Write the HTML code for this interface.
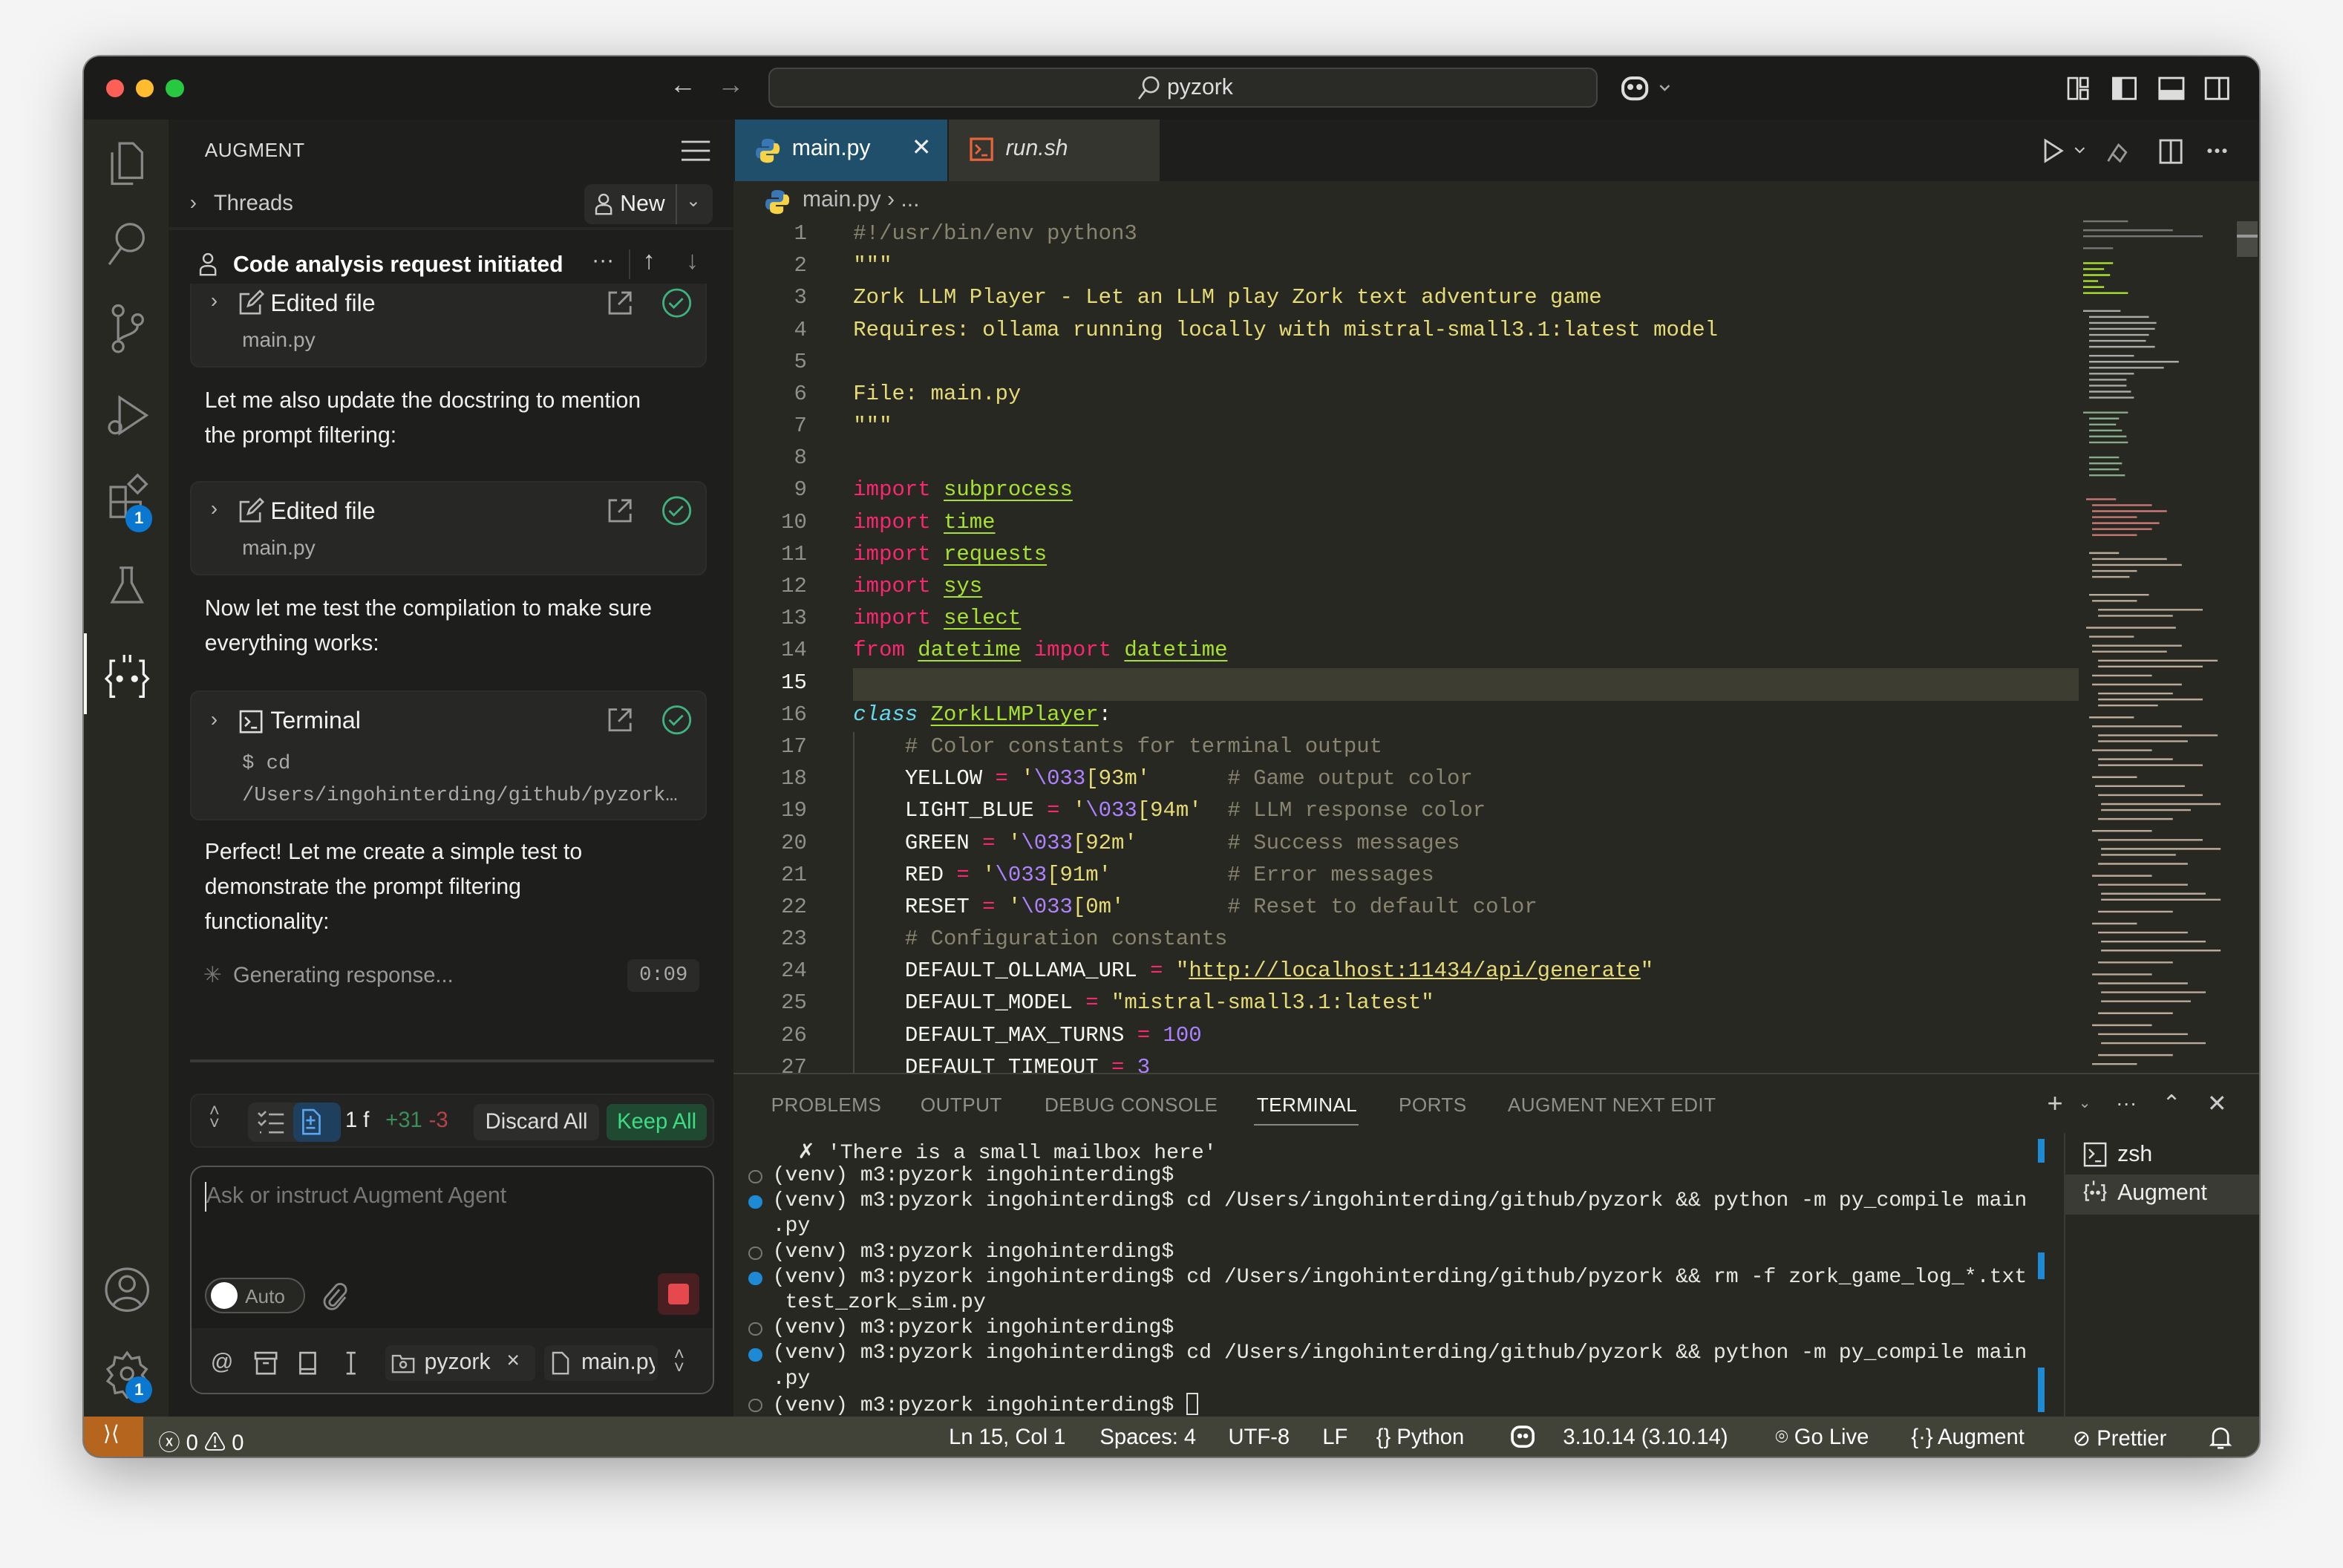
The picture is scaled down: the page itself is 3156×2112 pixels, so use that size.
<!DOCTYPE html>
<html><head><meta charset="utf-8">
<style>
*{box-sizing:border-box;margin:0;padding:0}
html,body{width:3156px;height:2112px;overflow:hidden;background:#f4f4f4}
#z{zoom:2.0128;width:1568px;height:1050px;position:relative;font-family:"Liberation Sans",sans-serif;}
.a{position:absolute}
.win{left:56px;top:38px;width:1456px;height:937px;border-radius:11px;background:#1e1f1c;overflow:hidden;box-shadow:0 10px 40px rgba(0,0,0,.35),0 0 0 1px rgba(0,0,0,.4)}
.mono{font-family:"Liberation Mono",monospace}
.ln{position:absolute;left:0;width:540px;text-align:right;color:#90908a;font-size:14.4px}
.cl{position:absolute;left:571px;white-space:pre;font-size:14.4px;color:#f8f8f2}
.k{color:#f92672}.g{color:#a6e22e;text-decoration:underline;text-underline-offset:3px}.y{color:#e6db74}.c{color:#88846f}.p{color:#ae81ff}.b{color:#66d9ef;font-style:italic}
.t{position:absolute;left:517px;white-space:pre;font-size:14px;color:#e8e8e2;font-family:"Liberation Mono",monospace}
.dot{position:absolute;left:501px;width:9px;height:9px;border-radius:50%}
.o{border:1.3px solid #777}.f{background:#1e8ad6}
.card{position:absolute;left:127px;width:346px;background:#272825;border-radius:6px;border:1px solid #2d2e2b}
.ct{color:#f2f2f2;font-size:16px}
.sub{color:#aaa;font-size:14px}
.msg{position:absolute;left:137px;color:#f0f0f0;font-size:15px;line-height:23.3px}
.st{position:absolute;top:954px;color:#fff;font-size:14.5px;white-space:nowrap}
.ptab{position:absolute;top:732px;font-size:13px;color:#8f908a;letter-spacing:.2px}
svg{position:absolute}
</style></head><body><div id="z">
<div class="a win">
</div>
<div class="a" style="left:56px;top:38px;width:1456px;height:42px;background:#1b1c19;border-radius:11px 11px 0 0"></div>
<div class="a" style="left:71px;top:53px;width:12px;height:12px;border-radius:50%;background:#fe5f57"></div>
<div class="a" style="left:91px;top:53px;width:12px;height:12px;border-radius:50%;background:#febc2e"></div>
<div class="a" style="left:111px;top:53px;width:12px;height:12px;border-radius:50%;background:#28c840"></div>
<div class="a" style="left:448px;top:46px;color:#ccc;font-size:18px">←</div>
<div class="a" style="left:480px;top:46px;color:#888;font-size:18px">→</div>
<div class="a" style="left:514px;top:45px;width:555px;height:27px;border-radius:6px;background:#2a2b27;border:1px solid #444"></div>
<svg style="left:760px;top:50px" width="18" height="18" viewBox="0 0 18 18"><circle cx="10" cy="6.5" r="5" fill="none" stroke="#ccc" stroke-width="1.3"/><path d="M6.5 10 L2 16" stroke="#ccc" stroke-width="1.3"/></svg>
<div class="a" style="left:781px;top:50px;color:#ddd;font-size:15px">pyzork</div>
<svg style="left:1084px;top:49px" width="36" height="20" viewBox="0 0 36 20"><rect x="2" y="3" width="16" height="14" rx="6" fill="none" stroke="#ddd" stroke-width="2"/><circle cx="7" cy="9" r="2" fill="#ddd"/><circle cx="13" cy="9" r="2" fill="#ddd"/><path d="M27 8l3 3 3-3" fill="none" stroke="#aaa" stroke-width="1.2"/></svg>
<svg style="left:1382px;top:49px" width="120" height="20" viewBox="0 0 120 20"><rect x="2" y="3" width="6" height="14" fill="none" stroke="#ddd" stroke-width="1.3"/><rect x="10" y="3" width="5" height="6" fill="none" stroke="#ddd" stroke-width="1.3"/><rect x="10" y="11" width="5" height="6" fill="none" stroke="#ddd" stroke-width="1.3"/><rect x="32" y="3" width="15" height="14" fill="none" stroke="#ddd" stroke-width="1.4"/><rect x="32" y="3" width="6" height="14" fill="#ddd"/><rect x="63" y="3" width="16" height="14" fill="none" stroke="#ddd" stroke-width="1.4"/><rect x="63" y="11" width="16" height="6" fill="#ddd"/><rect x="94" y="3" width="15" height="14" fill="none" stroke="#ddd" stroke-width="1.4"/><line x1="103" y1="3" x2="103" y2="17" stroke="#ddd" stroke-width="1.4"/></svg>

<div class="a" style="left:56px;top:80px;width:57px;height:868px;background:#272822"></div>
<div class="a" style="left:56px;top:424px;width:2px;height:54px;background:#f8f8f2"></div>
<svg style="left:68px;top:88px" width="34" height="380" viewBox="0 0 34 380" fill="none" stroke="#888" stroke-width="1.6">
 <path d="M12 8h9l6 6v17H12z M7 14v21h14"/>
 <circle cx="19" cy="71" r="9"/><path d="M13 78L5 89"/>
 <circle cx="11" cy="120" r="3.5"/><circle cx="11" cy="144" r="3.5"/><circle cx="24" cy="126" r="3.5"/><path d="M11 124v16 M24 130c0 6-10 6-13 10"/>
 <path d="M12 178l18 12-18 12z"/><circle cx="9" cy="198" r="4"/>
 <path d="M6 238h10v10H6z M6 248v10h10v-10 M16 248h10v10H16 M18 236l6-6 6 6-6 6z"/>
 <path d="M12 292h9 M14 292v10l-7 13h20l-7-13v-10"/>
</svg>
<div class="a" style="left:84px;top:338px;width:18px;height:18px;border-radius:50%;background:#0a78d0;color:#fff;font-size:11px;font-weight:bold;text-align:center;line-height:18px">1</div>
<svg style="left:68px;top:436px" width="34" height="34" viewBox="0 0 34 34" fill="none" stroke="#f2f2f2" stroke-width="1.6"><path d="M9 6H6v9l-3 3 3 3v9h3 M25 6h3v9l3 3-3 3v9h-3 M15 2v5 M19 2v5"/><circle cx="12" cy="18" r="1.5" fill="#f2f2f2"/><circle cx="22" cy="18" r="1.5" fill="#f2f2f2"/></svg>
<svg style="left:68px;top:846px" width="34" height="34" viewBox="0 0 34 34" fill="none" stroke="#888" stroke-width="1.6"><circle cx="17" cy="17" r="14"/><circle cx="17" cy="13" r="5"/><path d="M8 27c3-6 15-6 18 0"/></svg>
<svg style="left:68px;top:902px" width="34" height="34" viewBox="0 0 34 34" fill="none" stroke="#888" stroke-width="1.6"><path d="M17 3l3 4 5-1 1 5 4 3-3 4 3 4-4 3-1 5-5-1-3 4-3-4-5 1-1-5-4-3 3-4-3-4 4-3 1-5 5 1z"/><circle cx="17" cy="17" r="4"/></svg>
<div class="a" style="left:84px;top:921px;width:18px;height:18px;border-radius:50%;background:#0a78d0;color:#fff;font-size:11px;font-weight:bold;text-align:center;line-height:18px">1</div>

<div class="a" style="left:113px;top:80px;width:378px;height:868px;background:#1e1f1c"></div>
<div class="a" style="left:137px;top:93px;color:#ddd;font-size:13px;letter-spacing:.3px">AUGMENT</div>
<svg style="left:456px;top:94px" width="20" height="14" viewBox="0 0 20 14" stroke="#ccc" stroke-width="1.4"><path d="M0 1h19M0 7h19M0 13h19"/></svg>
<div class="a" style="left:127px;top:127px;color:#bbb;font-size:14px">›</div>
<div class="a" style="left:143px;top:128px;color:#ccc;font-size:14.5px">Threads</div>
<div class="a" style="left:391px;top:123px;width:86px;height:27px;border-radius:5px;background:#2b2c29"></div>
<div class="a" style="left:452px;top:123px;width:1px;height:27px;background:#444"></div>
<svg style="left:396px;top:128px" width="16" height="16" viewBox="0 0 16 16" fill="none" stroke="#ccc" stroke-width="1.2"><circle cx="8" cy="5" r="3"/><path d="M3 15v-3c0-2 2-3 5-3s5 1 5 3v3z"/></svg>
<div class="a" style="left:415px;top:128px;color:#eee;font-size:15px">New</div>
<div class="a" style="left:459px;top:127px;color:#bbb;font-size:12px">⌄</div>
<div class="a" style="left:113px;top:152px;width:378px;height:2px;background:#262724"></div>
<svg style="left:131px;top:168px" width="16" height="18" viewBox="0 0 16 18" fill="none" stroke="#ccc" stroke-width="1.2"><circle cx="8" cy="5" r="3"/><path d="M3 16v-3c0-2 2-3 5-3s5 1 5 3v3z"/></svg>
<div class="a" style="left:156px;top:169px;color:#fff;font-size:15px;font-weight:bold">Code analysis request initiated</div>
<div class="a" style="left:396px;top:166px;color:#ccc;font-size:15px">···</div>
<div class="a" style="left:421px;top:167px;width:1px;height:20px;background:#3a3a3a"></div>
<div class="a" style="left:430px;top:165px;color:#ccc;font-size:17px">↑</div>
<div class="a" style="left:459px;top:165px;color:#888;font-size:17px">↓</div>

<div class="card" style="top:190px;height:56px;border-top:none;border-radius:0 0 6px 6px"></div>
<div class="card" style="top:322px;height:63px"></div>
<div class="card" style="top:462px;height:87px"></div>
<div class="a" style="left:141px;top:193px;color:#bbb;font-size:14px">›</div>
<div class="a" style="left:141px;top:332px;color:#bbb;font-size:14px">›</div>
<div class="a" style="left:141px;top:473px;color:#bbb;font-size:14px">›</div>
<svg style="left:159px;top:194px" width="18" height="18" viewBox="0 0 18 18" fill="none" stroke="#bbb" stroke-width="1.3"><path d="M8 3H2v13h13v-6 M7 11l1-3 7-7 2 2-7 7z"/></svg>
<svg style="left:159px;top:333px" width="18" height="18" viewBox="0 0 18 18" fill="none" stroke="#bbb" stroke-width="1.3"><path d="M8 3H2v13h13v-6 M7 11l1-3 7-7 2 2-7 7z"/></svg>
<svg style="left:159px;top:474px" width="18" height="18" viewBox="0 0 18 18" fill="none" stroke="#ddd" stroke-width="1.3"><rect x="2" y="2" width="14" height="14"/><path d="M5 6l3 3-3 3 M9 13h4"/></svg>
<div class="a ct" style="left:181px;top:194px">Edited file</div>
<div class="a ct" style="left:181px;top:333px">Edited file</div>
<div class="a ct" style="left:181px;top:473px">Terminal</div>
<div class="a sub" style="left:162px;top:219px">main.py</div>
<div class="a sub" style="left:162px;top:358px">main.py</div>
<div class="a sub mono" style="left:162px;top:501px;font-size:13.5px;line-height:21px;color:#aaa">$ cd<br>/Users/ingohinterding/github/pyzork…</div>
<svg style="left:405px;top:193px" width="60" height="300" viewBox="0 0 60 300" fill="none" stroke-width="1.4">
 <g stroke="#999"><path d="M8 3H3v14h14v-5 M11 3h6v6 M17 3l-8 8"/></g>
 <g stroke="#3fb27f"><circle cx="48" cy="10" r="9"/><path d="M43 10l3 3 6-6"/></g>
 <g transform="translate(0,139)"><g stroke="#999"><path d="M8 3H3v14h14v-5 M11 3h6v6 M17 3l-8 8"/></g><g stroke="#3fb27f"><circle cx="48" cy="10" r="9"/><path d="M43 10l3 3 6-6"/></g></g>
 <g transform="translate(0,279)"><g stroke="#999"><path d="M8 3H3v14h14v-5 M11 3h6v6 M17 3l-8 8"/></g><g stroke="#3fb27f"><circle cx="48" cy="10" r="9"/><path d="M43 10l3 3 6-6"/></g></g>
</svg>
<div class="msg" style="top:257px">Let me also update the docstring to mention<br>the prompt filtering:</div>
<div class="msg" style="top:396px">Now let me test the compilation to make sure<br>everything works:</div>
<div class="msg" style="top:559px">Perfect! Let me create a simple test to<br>demonstrate the prompt filtering<br>functionality:</div>
<div class="a" style="left:136px;top:644px;color:#777;font-size:15px">✳</div>
<div class="a" style="left:156px;top:645px;color:#999;font-size:14.5px">Generating response...</div>
<div class="a mono" style="left:420px;top:642px;width:48px;height:22px;background:#2a2b28;border-radius:4px;color:#aaa;font-size:13.5px;text-align:center;line-height:22px">0:09</div>
<div class="a" style="left:127px;top:709px;width:351px;height:2px;background:#3a3b38"></div>
<div class="a" style="left:127px;top:732px;width:351px;height:36px;border-radius:6px;background:#232421;border:1px solid #2b2c29"></div>
<div class="a" style="left:140px;top:740px;color:#aaa;font-size:12px;line-height:8px">˄<br>˅</div>
<div class="a" style="left:166px;top:738px;width:62px;height:26px;border-radius:5px;background:#2d2e2b"></div>
<div class="a" style="left:196px;top:738px;width:32px;height:26px;border-radius:5px;background:#1f3f5f"></div>
<svg style="left:172px;top:742px" width="52" height="18" viewBox="0 0 52 18" fill="none" stroke-width="1.3"><path d="M1 3l2 2 3-3 M1 9l2 2 3-3 M8 4h10 M8 10h10 M8 16h10 M2 16h1" stroke="#aaa"/><path d="M31 1h7l4 4v12H31z M36 5v6 M33 8h6 M33 13h6" stroke="#5aa7f0"/></svg>
<div class="a" style="left:231px;top:742px;color:#eee;font-size:14.5px">1 f</div>
<div class="a" style="left:258px;top:742px;color:#3d8f5a;font-size:14.5px">+31</div>
<div class="a" style="left:287px;top:742px;color:#b8424a;font-size:14.5px">-3</div>
<div class="a" style="left:317px;top:739px;width:84px;height:24px;border-radius:4px;background:#2d2e2b;color:#ddd;font-size:14.5px;text-align:center;line-height:24px">Discard All</div>
<div class="a" style="left:406px;top:739px;width:67px;height:24px;border-radius:4px;background:#1f4a31;color:#3ddc84;font-size:14.5px;text-align:center;line-height:24px">Keep All</div>
<div class="a" style="left:127px;top:780px;width:351px;height:153px;border-radius:9px;border:1px solid #555;background:#1c1d1a;overflow:hidden">
 <div class="a" style="left:0;top:108px;width:351px;height:45px;background:#232421"></div>
</div>
<div class="a" style="left:137px;top:791px;width:1px;height:20px;background:#ddd"></div>
<div class="a" style="left:138px;top:792px;color:#777;font-size:15px">Ask or instruct Augment Agent</div>
<div class="a" style="left:137px;top:855px;width:67px;height:24px;border-radius:12px;border:1px solid #555;background:#262723"></div>
<div class="a" style="left:141px;top:858px;width:18px;height:18px;border-radius:50%;background:#fff"></div>
<div class="a" style="left:164px;top:860px;color:#999;font-size:13px">Auto</div>
<svg style="left:215px;top:857px" width="18" height="20" viewBox="0 0 18 20" fill="none" stroke="#888" stroke-width="1.4"><path d="M12 6l-6 7a2 2 0 0 0 3 3l7-8a4 4 0 0 0-6-5l-7 8a5 5 0 0 0 8 6l5-6"/></svg>
<div class="a" style="left:440px;top:852px;width:28px;height:28px;border-radius:4px;background:#4a1f22"></div>
<div class="a" style="left:447px;top:859px;width:14px;height:14px;border-radius:2px;background:#e5484d"></div>
<div class="a" style="left:141px;top:903px;color:#bbb;font-size:15px">@</div>
<svg style="left:170px;top:903px" width="80" height="18" viewBox="0 0 80 18" fill="none" stroke="#bbb" stroke-width="1.3"><path d="M1 2h14v4H1z M2 6v10h12V6 M6 9h4"/><path d="M31 2h10v14H31z M31 13h10"/><path d="M62 2h6 M65 2v14 M62 16h6"/></svg>
<div class="a" style="left:258px;top:900px;width:100px;height:24px;border-radius:4px;background:#2a2b28"></div>
<svg style="left:262px;top:904px" width="16" height="16" viewBox="0 0 16 16" fill="none" stroke="#bbb" stroke-width="1.2"><path d="M1 3h5l1 2h8v9H1z"/><circle cx="8" cy="9" r="2"/></svg>
<div class="a" style="left:284px;top:903px;color:#ddd;font-size:15px">pyzork</div>
<div class="a" style="left:339px;top:902px;color:#ccc;font-size:15px">×</div>
<div class="a" style="left:364px;top:900px;width:76px;height:24px;border-radius:4px;background:#2a2b28"></div>
<svg style="left:368px;top:904px" width="14" height="16" viewBox="0 0 14 16" fill="none" stroke="#bbb" stroke-width="1.2"><path d="M2 1h6l4 4v10H2z"/></svg>
<div class="a" style="left:389px;top:903px;color:#ddd;font-size:15px;width:49px;overflow:hidden;white-space:nowrap">main.py</div>
<div class="a" style="left:451px;top:902px;color:#bbb;font-size:12px;line-height:9px">˄<br>˅</div>

<div class="a" style="left:491px;top:80px;width:1021px;height:868px;background:#272822"></div>
<div class="a" style="left:491px;top:80px;width:1021px;height:41px;background:#1e1f1c"></div>
<div class="a" style="left:492px;top:80px;width:142px;height:41px;background:#1f4f6b"></div>
<div class="a" style="left:635px;top:80px;width:141px;height:41px;background:#34352f"></div>
<svg style="left:506px;top:92px" width="16" height="18" viewBox="0 0 16 18"><path d="M8 1c-4 0-4 2-4 3v2h5v1H2c-2 0-2 3-2 4s1 3 2 3h2v-2c0-2 1-3 3-3h4c1 0 2-1 2-2V4c0-2-2-3-5-3z" fill="#3a78b5"/><path d="M8 17c4 0 4-2 4-3v-2H7v-1h7c2 0 2-3 2-4s-1-3-2-3h-2v2c0 2-1 3-3 3H5c-1 0-2 1-2 2v3c0 2 2 3 5 3z" fill="#f7d348"/></svg>
<div class="a" style="left:530px;top:91px;color:#fff;font-size:15px">main.py</div>
<div class="a" style="left:610px;top:89px;color:#eee;font-size:16px">✕</div>
<svg style="left:649px;top:92px" width="16" height="16" viewBox="0 0 16 16"><rect x="1" y="1" width="14" height="14" fill="none" stroke="#e8643a" stroke-width="1.6"/><path d="M4 5l3 3-3 3 M8 12h4" stroke="#e8643a" stroke-width="1.4" fill="none"/></svg>
<div class="a" style="left:673px;top:91px;color:#ddd;font-size:15px;font-style:italic">run.sh</div>
<svg style="left:1366px;top:92px" width="130" height="18" viewBox="0 0 130 18" fill="none" stroke="#ccc" stroke-width="1.4"><path d="M3 2l11 7-11 7z"/><path d="M23 7l3 3 3-3" stroke-width="1"/><path d="M52 5l5 5-4 6-5-5z M48 11l-3 5" stroke="#999"/><rect x="80" y="2" width="14" height="15"/><line x1="87" y1="2" x2="87" y2="17"/><circle cx="113" cy="9" r=".8" fill="#ccc"/><circle cx="118" cy="9" r=".8" fill="#ccc"/><circle cx="123" cy="9" r=".8" fill="#ccc"/></svg>
<svg style="left:512px;top:126px" width="16" height="18" viewBox="0 0 16 18"><path d="M8 1c-4 0-4 2-4 3v2h5v1H2c-2 0-2 3-2 4s1 3 2 3h2v-2c0-2 1-3 3-3h4c1 0 2-1 2-2V4c0-2-2-3-5-3z" fill="#3a78b5"/><path d="M8 17c4 0 4-2 4-3v-2H7v-1h7c2 0 2-3 2-4s-1-3-2-3h-2v2c0 2-1 3-3 3H5c-1 0-2 1-2 2v3c0 2 2 3 5 3z" fill="#f7d348"/></svg>
<div class="a" style="left:537px;top:125px;color:#bbb;font-size:15px">main.py › ...</div>
<div class="a" style="left:571px;top:447px;width:820px;height:22px;background:#3e3d32"></div>
<div class="a" style="left:571px;top:490px;width:1px;height:228px;background:#464741"></div>
<div class="mono a" style="left:0;top:0">
<div class="ln" style="top:148px">1</div><div class="cl c" style="top:148px">#!/usr/bin/env python3</div>
<div class="ln" style="top:169.5px">2</div><div class="cl y" style="top:169.5px">"""</div>
<div class="ln" style="top:191px">3</div><div class="cl y" style="top:191px">Zork LLM Player - Let an LLM play Zork text adventure game</div>
<div class="ln" style="top:212.4px">4</div><div class="cl y" style="top:212.4px">Requires: ollama running locally with mistral-small3.1:latest model</div>
<div class="ln" style="top:233.8px">5</div>
<div class="ln" style="top:255.3px">6</div><div class="cl y" style="top:255.3px">File: main.py</div>
<div class="ln" style="top:276.7px">7</div><div class="cl y" style="top:276.7px">"""</div>
<div class="ln" style="top:298.2px">8</div>
<div class="ln" style="top:319.7px">9</div><div class="cl" style="top:319.7px"><span class="k">import</span> <span class="g">subprocess</span></div>
<div class="ln" style="top:341.1px">10</div><div class="cl" style="top:341.1px"><span class="k">import</span> <span class="g">time</span></div>
<div class="ln" style="top:362.6px">11</div><div class="cl" style="top:362.6px"><span class="k">import</span> <span class="g">requests</span></div>
<div class="ln" style="top:384px">12</div><div class="cl" style="top:384px"><span class="k">import</span> <span class="g">sys</span></div>
<div class="ln" style="top:405.5px">13</div><div class="cl" style="top:405.5px"><span class="k">import</span> <span class="g">select</span></div>
<div class="ln" style="top:427px">14</div><div class="cl" style="top:427px"><span class="k">from</span> <span class="g">datetime</span> <span class="k">import</span> <span class="g">datetime</span></div>
<div class="ln" style="top:448.4px;color:#f8f8f2">15</div>
<div class="ln" style="top:469.9px">16</div><div class="cl" style="top:469.9px"><span class="b">class</span> <span class="g">ZorkLLMPlayer</span>:</div>
<div class="ln" style="top:491.3px">17</div><div class="cl" style="top:491.3px">    <span class="c"># Color constants for terminal output</span></div>
<div class="ln" style="top:512.8px">18</div><div class="cl" style="top:512.8px">    YELLOW <span class="k">=</span> <span class="y">'<span class="p">\033</span>[93m'</span>      <span class="c"># Game output color</span></div>
<div class="ln" style="top:534.2px">19</div><div class="cl" style="top:534.2px">    LIGHT_BLUE <span class="k">=</span> <span class="y">'<span class="p">\033</span>[94m'</span>  <span class="c"># LLM response color</span></div>
<div class="ln" style="top:555.7px">20</div><div class="cl" style="top:555.7px">    GREEN <span class="k">=</span> <span class="y">'<span class="p">\033</span>[92m'</span>       <span class="c"># Success messages</span></div>
<div class="ln" style="top:577.1px">21</div><div class="cl" style="top:577.1px">    RED <span class="k">=</span> <span class="y">'<span class="p">\033</span>[91m'</span>         <span class="c"># Error messages</span></div>
<div class="ln" style="top:598.6px">22</div><div class="cl" style="top:598.6px">    RESET <span class="k">=</span> <span class="y">'<span class="p">\033</span>[0m'</span>        <span class="c"># Reset to default color</span></div>
<div class="ln" style="top:620px">23</div><div class="cl" style="top:620px">    <span class="c"># Configuration constants</span></div>
<div class="ln" style="top:641.5px">24</div><div class="cl" style="top:641.5px">    DEFAULT_OLLAMA_URL <span class="k">=</span> <span class="y">"<u>http://localhost:11434/api/generate</u>"</span></div>
<div class="ln" style="top:663px">25</div><div class="cl" style="top:663px">    DEFAULT_MODEL <span class="k">=</span> <span class="y">"mistral-small3.1:latest"</span></div>
<div class="ln" style="top:684.4px">26</div><div class="cl" style="top:684.4px">    DEFAULT_MAX_TURNS <span class="k">=</span> <span class="p">100</span></div>
<div class="ln" style="top:705.9px">27</div><div class="cl" style="top:705.9px">    DEFAULT_TIMEOUT <span class="k">=</span> <span class="p">3</span></div>
</div>
<svg style="left:1394px;top:146px" width="100" height="572" viewBox="0 0 100 572">
<g stroke-width="1.2">
<path stroke="#777" d="M0 2h30 M0 8h60 M0 12h80 M0 20h20"/>
<path stroke="#a6e22e" d="M0 30h20 M0 34h14 M0 38h18 M0 42h10 M0 46h14 M0 50h30"/>
<path stroke="#aaa" d="M0 62h25 M4 66h40 M4 70h45 M4 74h44 M4 78h40 M4 82h38 M4 86h44 M4 92h30 M4 96h60 M4 100h50 M4 104h30 M4 108h25 M4 112h25 M4 116h28 M4 120h30"/>
<path stroke="#8a8" d="M0 130h30 M4 134h20 M4 138h18 M4 142h22 M4 146h25 M4 150h26 M4 160h20 M4 164h22 M4 168h20 M4 172h24"/>
<path stroke="#c77" d="M2 188h20 M6 192h40 M6 196h50 M6 200h30 M6 204h45 M6 208h40 M6 212h30"/>
<path stroke="#ba9" d="M4 224h20 M6 228h50 M6 232h60 M6 236h30 M6 240h25 M4 252h40 M6 256h30 M10 262h70 M10 266h50 M2 274h60 M4 280h30 M6 286h60 M6 290h50 M10 296h80 M10 300h70 M6 306h40 M6 312h60 M10 318h50 M10 322h70 M10 326h40 M4 334h30 M6 340h60 M10 346h80 M10 350h60 M6 356h40 M10 362h50 M10 366h70 M6 374h30 M8 380h60 M10 386h70 M12 392h80 M12 396h60 M10 402h50 M6 410h40 M10 416h70 M12 422h80 M12 426h50 M10 432h60 M6 440h40 M10 446h60 M12 452h70 M12 456h80 M10 464h50 M6 472h30 M10 478h60 M12 484h70 M12 490h80 M10 498h50 M6 506h40 M10 512h60 M12 518h70 M12 524h60 M10 532h50 M6 540h40 M10 546h60 M12 552h70 M10 560h50 M6 566h30"/>
</g></svg>
<div class="a" style="left:1497px;top:148px;width:14px;height:24px;background:#4a4b45"></div>
<div class="a" style="left:1497px;top:157px;width:14px;height:2px;background:#999"></div>

<div class="a" style="left:491px;top:718px;width:1021px;height:230px;background:#272822;border-top:1px solid #414339"></div>
<div class="ptab" style="left:516px">PROBLEMS</div>
<div class="ptab" style="left:616px">OUTPUT</div>
<div class="ptab" style="left:699px">DEBUG CONSOLE</div>
<div class="ptab" style="left:841px;color:#f8f8f2">TERMINAL</div>
<div class="a" style="left:839px;top:752px;width:70px;height:1px;background:#888"></div>
<div class="ptab" style="left:936px">PORTS</div>
<div class="ptab" style="left:1009px">AUGMENT NEXT EDIT</div>
<div class="a" style="left:1370px;top:728px;color:#ccc;font-size:18px">+</div>
<div class="a" style="left:1391px;top:732px;color:#aaa;font-size:10px">⌄</div>
<div class="a" style="left:1416px;top:730px;color:#ccc;font-size:14px">···</div>
<div class="a" style="left:1447px;top:730px;color:#ccc;font-size:15px">⌃</div>
<div class="a" style="left:1477px;top:729px;color:#ccc;font-size:16px">✕</div>
<div class="t" style="top:762px">  ✗ 'There is a small mailbox here'</div>
<div class="dot o" style="top:783px"></div><div class="t" style="top:779px">(venv) m3:pyzork ingohinterding$</div>
<div class="dot f" style="top:800px"></div><div class="t" style="top:796px">(venv) m3:pyzork ingohinterding$ cd /Users/ingohinterding/github/pyzork &amp;&amp; python -m py_compile main</div>
<div class="t" style="top:813px">.py</div>
<div class="dot o" style="top:834px"></div><div class="t" style="top:830px">(venv) m3:pyzork ingohinterding$</div>
<div class="dot f" style="top:851px"></div><div class="t" style="top:847px">(venv) m3:pyzork ingohinterding$ cd /Users/ingohinterding/github/pyzork &amp;&amp; rm -f zork_game_log_*.txt</div>
<div class="t" style="top:864px"> test_zork_sim.py</div>
<div class="dot o" style="top:885px"></div><div class="t" style="top:881px">(venv) m3:pyzork ingohinterding$</div>
<div class="dot f" style="top:902px"></div><div class="t" style="top:898px">(venv) m3:pyzork ingohinterding$ cd /Users/ingohinterding/github/pyzork &amp;&amp; python -m py_compile main</div>
<div class="t" style="top:915px">.py</div>
<div class="dot o" style="top:936px"></div><div class="t" style="top:932px">(venv) m3:pyzork ingohinterding$ <span style="display:inline-block;width:8px;height:15px;border:1px solid #ddd;vertical-align:-3px"></span></div>
<div class="a" style="left:1364px;top:762px;width:4px;height:16px;background:#1e8ad6"></div>
<div class="a" style="left:1364px;top:838px;width:4px;height:18px;background:#1e8ad6"></div>
<div class="a" style="left:1364px;top:915px;width:4px;height:30px;background:#1e8ad6"></div>
<div class="a" style="left:1381px;top:758px;width:1px;height:190px;background:#3a3b35"></div>
<div class="a" style="left:1382px;top:786px;width:130px;height:27px;background:#3a3b35"></div>
<svg style="left:1394px;top:764px" width="18" height="40" viewBox="0 0 18 40" fill="none" stroke="#ddd" stroke-width="1.2"><rect x="1" y="1" width="14" height="15"/><path d="M4 5l3 3-3 3 M8 13h4"/><path d="M4 29H2v4l-1 1 1 1v4h2 M12 29h2v4l1 1-1 1v4h-2 M7 26v3"/><circle cx="6" cy="34" r=".8" fill="#ddd"/><circle cx="10" cy="34" r=".8" fill="#ddd"/></svg>
<div class="a" style="left:1417px;top:764px;color:#eee;font-size:15px">zsh</div>
<div class="a" style="left:1417px;top:790px;color:#eee;font-size:15px">Augment</div>

<div class="a" style="left:56px;top:948px;width:1456px;height:27px;background:#414339;border-radius:0 0 11px 11px"></div>
<div class="a" style="left:56px;top:948px;width:40px;height:27px;background:#b5651d;border-radius:0 0 0 11px"></div>
<div class="a" style="left:69px;top:951px;color:#fff;font-size:14px">⟩⟨</div>
<div class="st" style="left:106px">ⓧ 0 ⚠ 0</div>
<div class="st" style="left:635px">Ln 15, Col 1</div>
<div class="st" style="left:736px">Spaces: 4</div>
<div class="st" style="left:822px">UTF-8</div>
<div class="st" style="left:885px">LF</div>
<div class="st" style="left:921px">{} Python</div>
<svg style="left:1010px;top:953px" width="18" height="17" viewBox="0 0 18 17"><rect x="2" y="2" width="14" height="13" rx="5" fill="none" stroke="#fff" stroke-width="1.8"/><circle cx="7" cy="8" r="1.6" fill="#fff"/><circle cx="11" cy="8" r="1.6" fill="#fff"/></svg>
<div class="st" style="left:1046px">3.10.14 (3.10.14)</div>
<div class="st" style="left:1188px">⌾ Go Live</div>
<div class="st" style="left:1279px">{·} Augment</div>
<div class="st" style="left:1387px">⊘ Prettier</div>
<svg style="left:1478px;top:953px" width="16" height="18" viewBox="0 0 16 18" fill="none" stroke="#fff" stroke-width="1.3"><path d="M3 13V8a5 5 0 0 1 10 0v5l1 1H2z M6 16h4"/></svg>
</div></body></html>
